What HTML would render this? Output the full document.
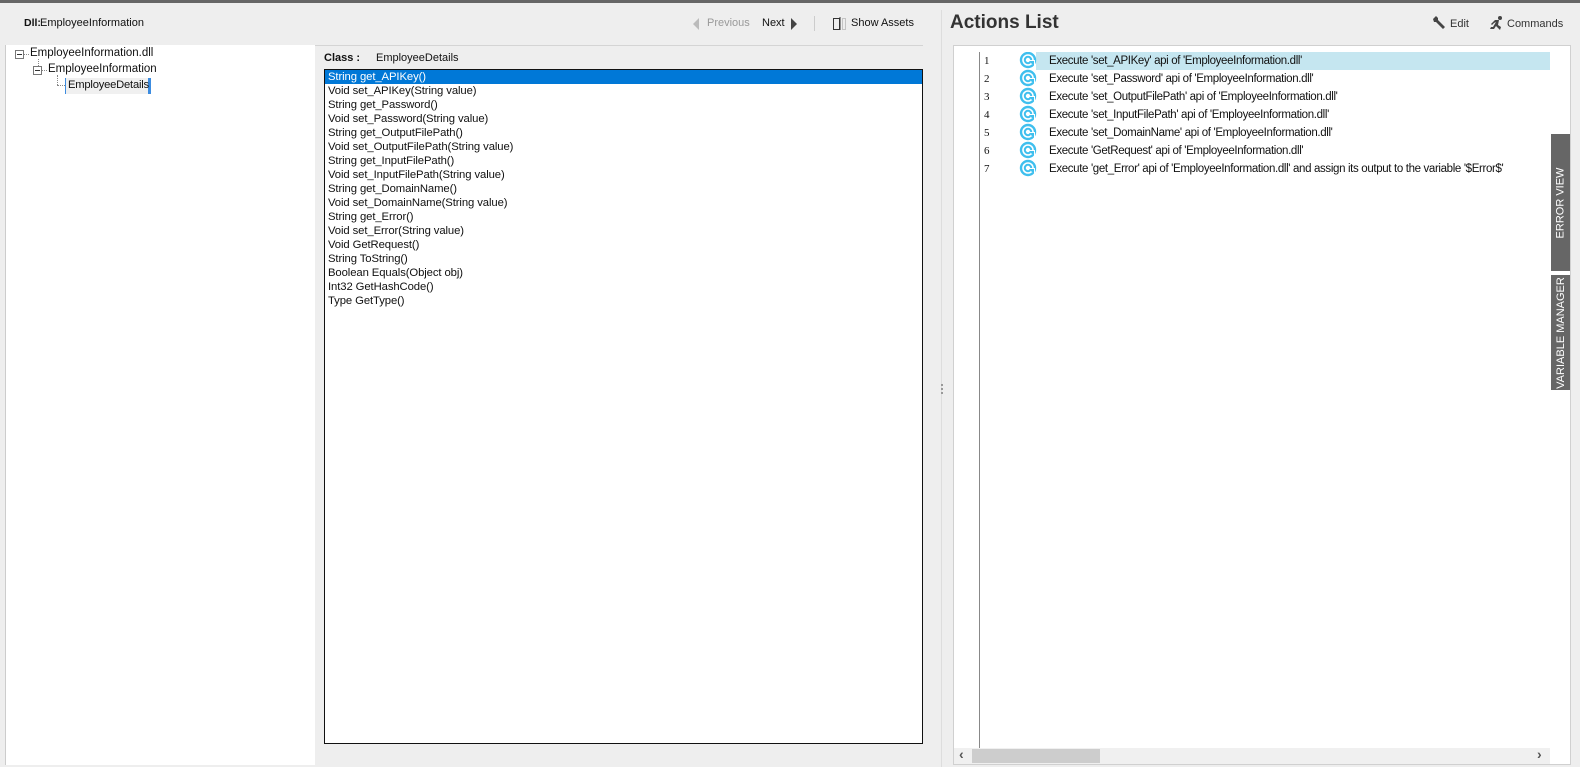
<!DOCTYPE html>
<html><head><meta charset="utf-8"><style>
*{margin:0;padding:0;box-sizing:border-box}
body{width:1580px;height:767px;background:#eeeeee;font-family:"Liberation Sans",Arial,sans-serif;font-size:12px;color:#111;position:relative;overflow:hidden}
.a{position:absolute;white-space:nowrap}
#top{left:0;top:0;width:1580px;height:3px;background:#666}
#tree{left:5px;top:45px;width:310px;height:720px;background:#fff;border-left:1px solid #ccc}
#hline{left:5px;top:45px;width:918px;height:1px;background:#d4d4d4}
#list{left:324px;top:69px;width:599px;height:675px;background:#fff;border:1px solid #111}
.li{height:14px;line-height:14px;padding-left:3px;font-size:11.3px;letter-spacing:-0.1px}
.sel{background:#0078d7;color:#fff}
#rbox{left:953px;top:45px;width:618px;height:720px;background:#fff;border:1px solid #d0d0d0}
.row{position:absolute;left:0;height:18px;line-height:18px;font-size:11.5px;letter-spacing:-0.35px}
.num{position:absolute;left:30px;font-family:"Liberation Serif",serif;font-size:11px}
.txt{position:absolute;left:95px}
.tab{background:#666;color:#fff;font-size:11px;display:flex;align-items:center;justify-content:center;overflow:visible}
.tab span{transform:rotate(-90deg);white-space:nowrap;display:block}
</style></head><body>
<div class="a" id="top"></div>
<div class="a" style="left:24px;top:17px;font-weight:bold;font-size:10.5px">Dll:</div>
<div class="a" style="left:40px;top:17px;font-size:11px">EmployeeInformation</div>
<div class="a" id="hline"></div>
<div class="a" id="tree"></div>
<div class="a" style="left:15px;top:50px;width:9px;height:9px;border:1px solid #777;background:#fff"></div>
<div class="a" style="left:17px;top:54px;width:5px;height:1px;background:#333"></div>
<div class="a" style="left:24px;top:54px;width:5px;border-top:1px dotted #888"></div>
<div class="a" style="left:30px;top:47px;font-size:11.5px">EmployeeInformation.dll</div>
<div class="a" style="left:38px;top:59px;height:7px;border-left:1px dotted #888"></div>
<div class="a" style="left:33px;top:66px;width:9px;height:9px;border:1px solid #777;background:#fff"></div>
<div class="a" style="left:35px;top:70px;width:5px;height:1px;background:#333"></div>
<div class="a" style="left:42px;top:70px;width:5px;border-top:1px dotted #888"></div>
<div class="a" style="left:48px;top:63px;font-size:11.5px">EmployeeInformation</div>
<div class="a" style="left:57px;top:75px;height:10px;border-left:1px dotted #888"></div>
<div class="a" style="left:57px;top:85px;width:8px;border-top:1px dotted #888"></div>
<div class="a" style="left:65px;top:78px;width:86px;height:16px;background:#f0f0f0;border-left:1px solid #3c8ce0;border-right:3px solid #3c8ce0"></div>
<div class="a" style="left:68px;top:79px;font-size:11.2px;letter-spacing:-0.2px">EmployeeDetails</div>
<div class="a" style="left:324px;top:52px;font-weight:bold;font-size:11px">Class :</div>
<div class="a" style="left:376px;top:52px;font-size:11px">EmployeeDetails</div>
<div class="a" id="list">
<div class="li sel">String get_APIKey()</div>
<div class="li">Void set_APIKey(String value)</div>
<div class="li">String get_Password()</div>
<div class="li">Void set_Password(String value)</div>
<div class="li">String get_OutputFilePath()</div>
<div class="li">Void set_OutputFilePath(String value)</div>
<div class="li">String get_InputFilePath()</div>
<div class="li">Void set_InputFilePath(String value)</div>
<div class="li">String get_DomainName()</div>
<div class="li">Void set_DomainName(String value)</div>
<div class="li">String get_Error()</div>
<div class="li">Void set_Error(String value)</div>
<div class="li">Void GetRequest()</div>
<div class="li">String ToString()</div>
<div class="li">Boolean Equals(Object obj)</div>
<div class="li">Int32 GetHashCode()</div>
<div class="li">Type GetType()</div>
</div>
<svg class="a" style="left:693px;top:18px" width="6" height="12"><path d="M6 0L0 6L6 12Z" fill="#bbb"/></svg>
<div class="a" style="left:707px;top:17px;color:#999;font-size:11px">Previous</div>
<div class="a" style="left:762px;top:17px;font-size:11px">Next</div>
<svg class="a" style="left:791px;top:18px" width="6" height="12"><path d="M0 0L6 6L0 12Z" fill="#444"/></svg>
<div class="a" style="left:814px;top:16px;width:1px;height:15px;background:#ccc"></div>
<svg class="a" style="left:833px;top:17px" width="14" height="13"><rect x="0.5" y="1.5" width="6" height="11" fill="none" stroke="#333"/><line x1="7" y1="0" x2="7" y2="13" stroke="#333"/><rect x="9.5" y="1.5" width="3" height="11" fill="none" stroke="#999" stroke-dasharray="1 1"/></svg>
<div class="a" style="left:851px;top:17px;font-size:11px">Show Assets</div>
<div class="a" style="left:941px;top:10px;width:1px;height:757px;background:#ddd"></div>
<div class="a" style="left:941px;top:384px;width:2px;height:10px;border-left:2px dotted #999"></div>
<div class="a" style="left:950px;top:12px;font-weight:bold;font-size:19px;color:#333">Actions List</div>
<svg class="a" style="left:1431px;top:15px" width="15" height="15"><path d="M2 4L5 1L7 3L7 5L14 12L12 14L5 7L3 7Z" fill="#444"/></svg>
<div class="a" style="left:1450px;top:18px;font-size:11px;color:#333">Edit</div>
<svg class="a" style="left:1489px;top:15px" width="15" height="16"><circle cx="11" cy="3" r="2" fill="#444"/><path d="M6 5L10 5L9 10L12 12L11 15L7 11L5 14L1 14L2 12L4 12L7 7L5 8L3 10L2 9Z" fill="#444"/></svg>
<div class="a" style="left:1507px;top:18px;font-size:11px;color:#333">Commands</div>
<div class="a" id="rbox">
<div class="a" style="left:25px;top:6px;width:1px;height:697px;background:#888"></div>
<div class="a" style="left:82px;top:6px;width:514px;height:18px;background:#c5e6f0"></div>
<div class="row" style="top:6px;width:600px"><span class="num">1</span><span class="txt">Execute 'set_APIKey' api of 'EmployeeInformation.dll'</span></div>
<div class="row" style="top:24px;width:600px"><span class="num">2</span><span class="txt">Execute 'set_Password' api of 'EmployeeInformation.dll'</span></div>
<div class="row" style="top:42px;width:600px"><span class="num">3</span><span class="txt">Execute 'set_OutputFilePath' api of 'EmployeeInformation.dll'</span></div>
<div class="row" style="top:60px;width:600px"><span class="num">4</span><span class="txt">Execute 'set_InputFilePath' api of 'EmployeeInformation.dll'</span></div>
<div class="row" style="top:78px;width:600px"><span class="num">5</span><span class="txt">Execute 'set_DomainName' api of 'EmployeeInformation.dll'</span></div>
<div class="row" style="top:96px;width:600px"><span class="num">6</span><span class="txt">Execute 'GetRequest' api of 'EmployeeInformation.dll'</span></div>
<div class="row" style="top:114px;width:600px"><span class="num">7</span><span class="txt">Execute 'get_Error' api of 'EmployeeInformation.dll' and assign its output to the variable '$Error$'</span></div>
<div class="a" style="left:0;top:702px;width:596px;height:16px;background:#f0f0f0"></div>
<div class="a" style="left:18px;top:703px;width:128px;height:14px;background:#cdcdcd"></div>
<div class="a" style="left:5px;top:700px;font-size:14px;font-weight:bold;color:#555">&#8249;</div>
<div class="a" style="left:583px;top:700px;font-size:14px;font-weight:bold;color:#555">&#8250;</div>
</div>
<div class="a tab" style="left:1551px;top:134px;width:19px;height:137px"><span>ERROR VIEW</span></div>
<div class="a tab" style="left:1551px;top:275px;width:19px;height:115px"><span>VARIABLE MANAGER</span></div>
<svg class="a" style="left:1019px;top:52px" width="18" height="128">
<defs><g id="ic"><circle cx="9" cy="8" r="7" fill="none" stroke="#3fbfee" stroke-width="2.4"/><circle cx="9" cy="8" r="3.2" fill="none" stroke="#3fbfee" stroke-width="2"/><path d="M9 8L16 8L16 15Z" fill="#fff"/><path d="M10 9L15 9L15 14Z" fill="#3fbfee"/></g></defs>
<use href="#ic" y="0"/><use href="#ic" y="18"/><use href="#ic" y="36"/><use href="#ic" y="54"/><use href="#ic" y="72"/><use href="#ic" y="90"/><use href="#ic" y="108"/>
</svg>
</body></html>
